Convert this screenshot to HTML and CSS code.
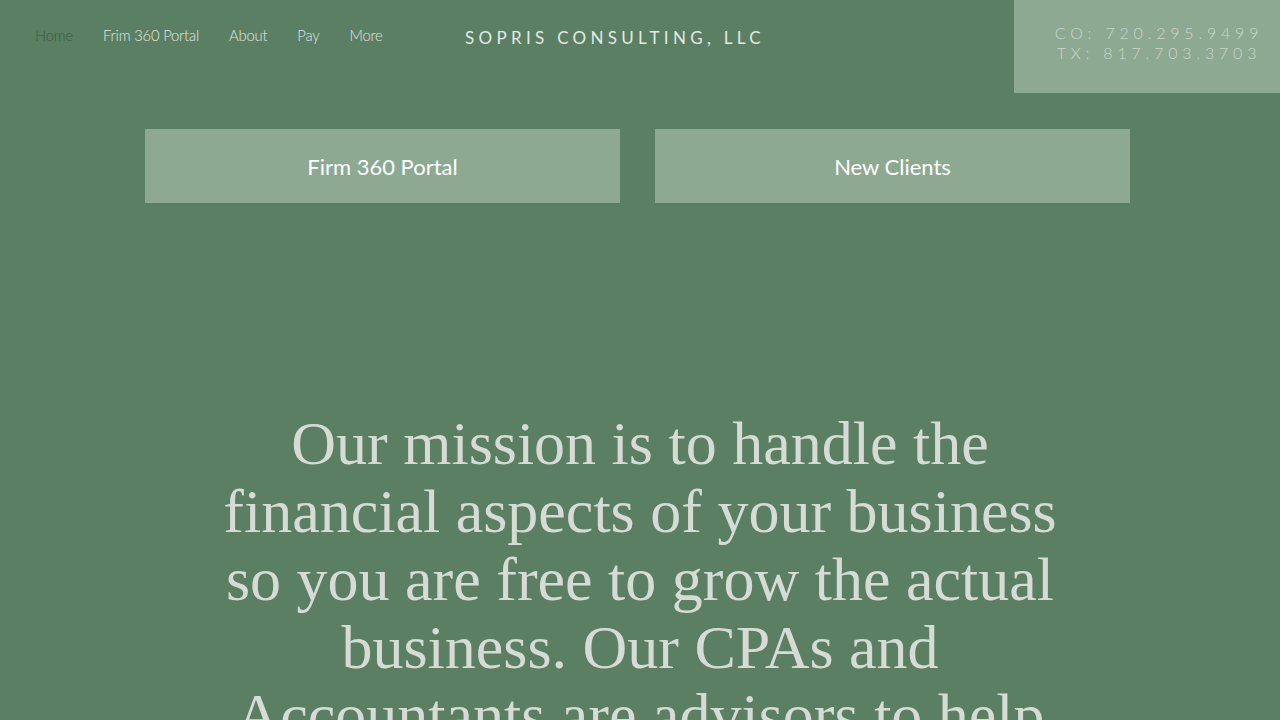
FILE: index.html
```html
<!DOCTYPE html>
<html lang="en">
<head>
    <meta charset="UTF-8">
    <meta name="viewport" content="width=device-width, initial-scale=1.0">
    <title>Sopris Consulting, LLC</title>
    <link rel="stylesheet" href="styles.css">
</head>
<body>

    <header class="site-header">
        <nav class="main-nav">
            <a href="#" class="nav-link active">Home</a>
            <a href="#" class="nav-link">Frim 360 Portal</a>
            <a href="#" class="nav-link">About</a>
            <a href="#" class="nav-link">Pay</a>
            <a href="#" class="nav-link">More</a>
        </nav>
        <div class="brand">SOPRIS CONSULTING, LLC</div>
        <div class="phones">
            <span>CO: 720.295.9499</span>
            <span>TX: 817.703.3703</span>
        </div>
    </header>

    <section class="cta-row">
        <a href="#" class="cta-btn">Firm 360 Portal</a>
        <a href="#" class="cta-btn">New Clients</a>
    </section>

    <section class="mission">
        <h1>Our mission is to handle the financial aspects of your business so you are free to grow the actual business. Our CPAs and Accountants are advisors to help you succeed.</h1>
    </section>

</body>
</html>
```

FILE: styles.css
```css
/* Общие стили */
body {
    font-family: 'Lato', 'Open Sans', sans-serif;
    background: #5a7f62;
    color: #e4eae4;
    margin: 0;
    padding: 0;
    overflow: hidden;
}

a {
    text-decoration: none;
    color: inherit;
}

/* Шапка */
.site-header {
    display: flex;
    align-items: flex-start;
    height: 93px;
}

.main-nav {
    display: flex;
    gap: 30px;
    padding: 26px 0 0 35px;
    width: 430px;
}

.nav-link {
    font-size: 14.8px;
    font-weight: 300;
    color: #e0e7e0;
    letter-spacing: -0.2px;
}

.nav-link.active {
    color: #3b5b42;
}

.brand {
    padding-top: 27px;
    font-size: 17px;
    letter-spacing: 4.3px;
    color: #e3e9e3;
    width: 549px;
    white-space: nowrap;
}

.phones {
    margin-left: auto;
    width: 266px;
    height: 93px;
    background-color: #8da991;
    display: flex;
    flex-direction: column;
    align-items: center;
    padding: 23px 0 0 24px;
    box-sizing: border-box;
    font-size: 16px;
    line-height: 20px;
    letter-spacing: 4.8px;
    color: #c9d7ca;
    font-weight: 300;
}

/* Кнопки */
.cta-row {
    display: flex;
    justify-content: center;
    gap: 35px;
    margin-top: 36px;
    padding-right: 5px;
}

.cta-btn {
    width: 475px;
    height: 74px;
    background-color: #8da991;
    color: #ffffff;
    display: flex;
    align-items: center;
    justify-content: center;
    font-size: 22px;
    font-weight: 400;
}

/* Миссия */
.mission {
    display: flex;
    justify-content: center;
    margin-top: 206px;
}

.mission h1 {
    width: 860px;
    margin: 0;
    text-align: center;
    font-family: 'Liberation Serif', serif;
    font-weight: 400;
    font-size: 62px;
    line-height: 68px;
    color: #d6dbd4;
}
```
